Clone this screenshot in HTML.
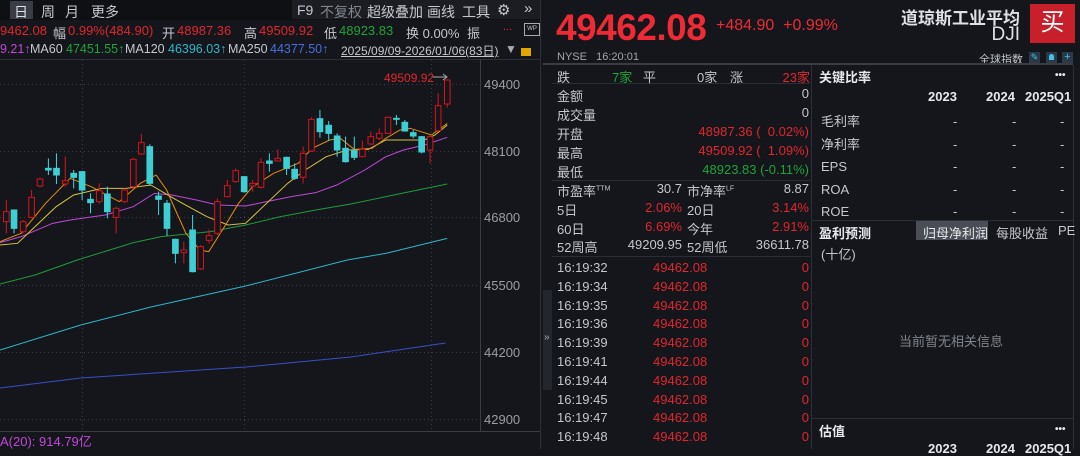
<!DOCTYPE html>
<html><head><meta charset="utf-8"><style>
*{margin:0;padding:0;box-sizing:border-box}
body{width:1080px;height:449px;background:#14161b;overflow:hidden;position:relative;font-family:"Liberation Sans","Noto Sans CJK SC",sans-serif;font-size:13px;color:#c4c7ce}
.a{position:absolute;white-space:nowrap}
.r{color:#e0262f}.g{color:#1fa33a}.w{color:#c8cbd2}
.hd{font-weight:bold;color:#e6e8ec}
.h{position:absolute;white-space:nowrap;font-size:13px;top:23px}
.m{position:absolute;white-space:nowrap;font-size:12.5px;top:42px}
.t{position:absolute;white-space:nowrap;font-size:14px;top:2px}
</style></head><body>
<!-- left header -->
<div class="a" style="left:0;top:0;width:541px;height:20px;background:#0f1014"></div>
<div class="a" style="left:10px;top:1px;width:23px;height:18px;background:#3a3d45"></div>
<div class="t" style="left:14px;color:#dfe1e6">日</div>
<div class="t" style="left:41px">周</div>
<div class="t" style="left:65px">月</div>
<div class="t" style="left:91px">更多</div>
<div class="a" style="left:292px;top:0;width:249px;height:19px;background:#1b1d22"></div>
<div class="t" style="left:297px">F9</div>
<div class="t" style="left:320px;color:#80848c">不复权</div>
<div class="t" style="left:367px">超级叠加</div>
<div class="t" style="left:427px">画线</div>
<div class="t" style="left:462px">工具</div>
<div class="t" style="left:497px;top:1px;font-size:15px">⚙</div>
<div class="t" style="left:524px;top:0;font-size:15px">»</div>
<div class="h r" style="left:0">9462.08</div>
<div class="h" style="left:53px">幅</div><div class="h r" style="left:68px">0.99%(484.90)</div>
<div class="h" style="left:162px">开</div><div class="h r" style="left:177px">48987.36</div>
<div class="h" style="left:244px">高</div><div class="h r" style="left:259px">49509.92</div>
<div class="h" style="left:324px">低</div><div class="h g" style="left:339px">48923.83</div>
<div class="h" style="left:406px">换 0.00%</div>
<div class="h" style="left:467px">振</div>
<div class="h r" style="left:503px;top:21px;font-size:11px">...</div>
<div class="a" style="left:524px;top:23px;width:16px;height:13px;border:1px solid #aaa;font-size:6px;text-align:center;line-height:11px">WP</div>
<div class="m" style="left:0;color:#c048d8">9.21↑</div>
<div class="m" style="left:30px">MA60</div><div class="m g" style="left:66px">47451.55↑</div>
<div class="m" style="left:125px">MA120</div><div class="m" style="left:168px;color:#2fb6c8">46396.03↑</div>
<div class="m" style="left:228px">MA250</div><div class="m" style="left:270px;color:#4a6ee0">44377.50↑</div>
<div class="m" style="left:341px;text-decoration:underline;font-size:12px">2025/09/09-2026/01/06(83日)</div>
<div class="m" style="left:505px;color:#aaa;font-size:12px">▼</div>
<div class="a" style="left:521px;top:48px;width:10px;height:8px;background:#e0a800"></div>
<div class="a" style="left:0;top:59px;width:541px;height:1px;background:#2c2f36"></div>
<!-- chart -->
<svg class="a" style="left:0;top:0" width="541" height="449">
<g stroke="#3a3d44" stroke-dasharray="1,3" stroke-width="1">
<line x1="0" y1="84.5" x2="480" y2="84.5"/><line x1="0" y1="151.5" x2="480" y2="151.5"/><line x1="0" y1="217.5" x2="480" y2="217.5"/><line x1="0" y1="285.5" x2="480" y2="285.5"/><line x1="0" y1="352.5" x2="480" y2="352.5"/><line x1="0" y1="419.5" x2="480" y2="419.5"/>
<line x1="82.5" y1="60" x2="82.5" y2="430"/><line x1="244.5" y1="60" x2="244.5" y2="430"/><line x1="431.5" y1="60" x2="431.5" y2="430"/>
</g>
<line x1="480.5" y1="60" x2="480.5" y2="431" stroke="#3a3d44"/>
<line x1="0" y1="431.5" x2="540" y2="431.5" stroke="#3a3d44"/>
<line x1="540.5" y1="0" x2="540.5" y2="449" stroke="#2c2f36"/>
<g fill="#9a9da4" font-size="13" font-family="Liberation Sans">
<text x="484" y="89">49400</text><text x="484" y="156">48100</text><text x="484" y="222">46800</text><text x="484" y="290">45500</text><text x="484" y="357">44200</text><text x="484" y="424">42900</text>
</g>
<text x="384" y="82" fill="#e0262f" font-size="12" font-family="Liberation Sans">49509.92</text>
<line x1="433" y1="77" x2="447" y2="77" stroke="#aaa"/><path d="M443 74 L447 77 L443 80" stroke="#aaa" fill="none"/>
<g transform="translate(0,60) scale(0.3508,0.33333)" fill="none" stroke-width="3">
<polyline stroke="#3a4fc8" points="0,984 230,954 700,921 1000,891 1270,849"/>
<polyline stroke="#2fb6c8" points="0,870 230,795 430,741 700,678 990,600 1100,580 1275,535"/>
<polyline stroke="#1f9a3c" points="0,672 100,645 220,600 380,548 460,530 600,515 700,495 800,470 900,450 1000,432 1100,410 1200,388 1275,372"/>
<polyline stroke="#c048d8" points="0,548 60,530 150,490 200,480 300,465 380,440 440,400 490,405 560,420 620,435 700,438 760,425 830,410 900,398 960,375 1040,330 1100,290 1150,270 1210,255 1275,232"/>
<polyline stroke="#d8c040" points="0,555 50,550 100,500 160,440 210,405 290,385 360,385 430,375 470,400 520,430 590,470 650,495 700,490 760,430 820,370 870,330 930,290 990,270 1050,268 1100,240 1160,240 1210,240 1240,225 1275,195"/>
<polyline stroke="#e08a10" points="0,545 60,520 130,430 200,355 260,380 340,425 400,370 445,345 475,390 500,450 530,520 570,570 595,575 640,500 680,430 720,380 780,340 850,310 890,265 940,240 970,235 1010,268 1060,265 1100,235 1140,210 1170,205 1200,215 1230,225 1275,190"/>
<g stroke="#d0141c" fill="#14161b">
<path d="M18 420V520M66 480V520M90 390V475M114 352V382M186 290V380M283 370V430M331 440V520M355 385V430M380 293V385M403 222V285M524 545V610M572 555V630M596 508V550M620 415V525M648 360V412M672 325V368M720 360V395M744 295V385M792 268V305M864 260V370M888 172V276M1033 242V292M1057 215V255M1081 205V240M1106 170V222M1226 225V310M1249 100V215M1275 58V143"/>
<rect x="10" y="455" width="16" height="30"/><rect x="58" y="485" width="16" height="30"/><rect x="82" y="412" width="16" height="60"/><rect x="106" y="357" width="16" height="21"/><rect x="178" y="362" width="16" height="10"/><rect x="275" y="392" width="16" height="33"/><rect x="323" y="445" width="16" height="27"/><rect x="347" y="390" width="16" height="35"/><rect x="372" y="298" width="16" height="82"/><rect x="395" y="248" width="16" height="34"/><rect x="516" y="570" width="16" height="8"/><rect x="564" y="560" width="16" height="67"/><rect x="588" y="527" width="16" height="14"/><rect x="612" y="425" width="16" height="95"/><rect x="640" y="377" width="16" height="33"/><rect x="664" y="332" width="16" height="33"/><rect x="712" y="370" width="16" height="8"/><rect x="736" y="307" width="16" height="75"/><rect x="784" y="295" width="16" height="8"/><rect x="856" y="280" width="16" height="72"/><rect x="880" y="178" width="16" height="95"/><rect x="1025" y="268" width="16" height="22"/><rect x="1049" y="230" width="16" height="22"/><rect x="1073" y="220" width="16" height="15"/><rect x="1098" y="172" width="16" height="48"/><rect x="1218" y="230" width="16" height="40"/><rect x="1241" y="137" width="16" height="75"/><rect x="1267" y="60" width="16" height="72"/>
</g>
<g stroke="#3dcfd4" fill="#3dcfd4">
<path d="M40 448V520M138 295V345M161 280V372M210 330V385M234 333V420M258 400V460M306 380V475M427 253V378M452 395V465M476 420V528M500 536V610M549 465V637M696 348V398M768 280V335M817 290V345M840 310V360M912 150V233M937 183V242M961 220V290M985 230V308M1010 230V300M1130 165V195M1154 180V215M1178 210V235M1202 228V280"/>
<rect x="32" y="450" width="16" height="55"/><rect x="130" y="325" width="16" height="5"/><rect x="153" y="325" width="16" height="20"/><rect x="202" y="340" width="16" height="12"/><rect x="226" y="335" width="16" height="55"/><rect x="250" y="418" width="16" height="10"/><rect x="298" y="402" width="16" height="53"/><rect x="419" y="260" width="16" height="110"/><rect x="444" y="408" width="16" height="10"/><rect x="468" y="430" width="16" height="75"/><rect x="492" y="538" width="16" height="42"/><rect x="541" y="510" width="16" height="125"/><rect x="688" y="350" width="16" height="45"/><rect x="760" y="303" width="16" height="7"/><rect x="809" y="292" width="16" height="33"/><rect x="832" y="328" width="16" height="27"/><rect x="904" y="176" width="16" height="39"/><rect x="929" y="196" width="16" height="24"/><rect x="953" y="228" width="16" height="42"/><rect x="977" y="265" width="16" height="40"/><rect x="1002" y="272" width="16" height="20"/><rect x="1122" y="175" width="16" height="3"/><rect x="1146" y="187" width="16" height="26"/><rect x="1170" y="218" width="16" height="10"/><rect x="1194" y="230" width="16" height="46"/>
</g>
</g>
<text x="0" y="446" fill="#c048d8" font-size="13" font-family="Liberation Sans,Noto Sans CJK SC">A(20): 914.79亿</text>
</svg>
<div class="a" style="left:543px;top:290px;width:9px;height:100px;background:#23262c"></div>
<div class="a" style="left:544px;top:332px;font-size:10px;color:#aaa">»</div>
<!-- right quote -->
<div class="a" style="left:556px;top:7px;font-size:37px;font-weight:bold;color:#ee2b35;letter-spacing:-0.5px">49462.08</div>
<div class="a" style="left:716px;top:17px;font-size:16px;color:#ee2b35">+484.90&nbsp;&nbsp;+0.99%</div>
<div class="a" style="right:60px;top:4px;font-size:17px;color:#dfe1e6;font-weight:bold">道琼斯工业平均</div>
<div class="a" style="right:60px;top:24px;font-size:19px;color:#dfe1e6">DJI</div>
<div class="a" style="left:1030px;top:4px;width:45px;height:39px;background:#c8202a;color:#fff;font-size:24px;text-align:center;line-height:38px">买</div>
<div class="a" style="left:557px;top:51px;font-size:11px;color:#a0a4ac">NYSE&nbsp;&nbsp;&nbsp;16:20:01</div>
<div class="a" style="left:979px;top:51px;font-size:11px;color:#c4c7ce">全球指数</div>
<div class="a" style="left:1029px;top:52px;width:11px;height:11px;background:#2a3a4a;color:#4ac0e0;font-size:9px;text-align:center;line-height:11px">✎</div>
<div class="a" style="left:1046px;top:52px;width:11px;height:11px;background:#2a3a4a"></div><div class="a" style="left:1049px;top:54px;width:5px;height:6px;background:#4ac0e0;border-radius:3px 3px 0 0"></div>
<div class="a" style="left:1062px;top:52px;width:11px;height:11px;background:#2a3a4a;color:#4ac0e0;font-size:11px;text-align:center;line-height:11px">+</div>
<div class="a" style="left:543px;top:63px;width:530px;height:2px;background:#3a3d44"></div>
<div class="a" style="left:811px;top:65px;width:1px;height:384px;background:#2c2f36"></div>
<div class="a" style="left:1073px;top:65px;width:1px;height:384px;background:#2c2f36"></div>
<div class="a" style="left:552px;top:83px;width:258px;height:1px;background:#2a2d33"></div>
<div class="a" style="left:552px;top:180px;width:258px;height:1px;background:#2a2d33"></div>
<div class="a" style="left:552px;top:256px;width:258px;height:1px;background:#2a2d33"></div>
<div class="a" style="left:557px;top:67px">跌</div><div class="a g" style="left:612px;top:67px">7家</div><div class="a" style="left:643px;top:67px">平</div><div class="a" style="left:697px;top:67px">0家</div><div class="a" style="left:730px;top:67px">涨</div><div class="a r" style="right:270px;top:67px">23家</div>
<div class="a" style="left:557px;top:86px">金额</div><div class="a" style="right:271px;top:86px">0</div>
<div class="a" style="left:557px;top:105px">成交量</div><div class="a" style="right:271px;top:105px">0</div>
<div class="a" style="left:557px;top:124px">开盘</div><div class="a r" style="right:271px;top:124px">48987.36 (&nbsp;&nbsp;0.02%)</div>
<div class="a" style="left:557px;top:143px">最高</div><div class="a r" style="right:271px;top:143px">49509.92 (&nbsp;&nbsp;1.09%)</div>
<div class="a" style="left:557px;top:162px">最低</div><div class="a g" style="right:271px;top:162px">48923.83 (-0.11%)</div>
<div class="a" style="left:557px;top:181px">市盈率<sup style="font-size:7px">TTM</sup></div><div class="a" style="right:398px;top:181px">30.7</div><div class="a" style="left:687px;top:181px">市净率<sup style="font-size:7px">LF</sup></div><div class="a" style="right:271px;top:181px">8.87</div>
<div class="a" style="left:557px;top:200px">5日</div><div class="a r" style="right:398px;top:200px">2.06%</div><div class="a" style="left:687px;top:200px">20日</div><div class="a r" style="right:271px;top:200px">3.14%</div>
<div class="a" style="left:557px;top:219px">60日</div><div class="a r" style="right:398px;top:219px">6.69%</div><div class="a" style="left:687px;top:219px">今年</div><div class="a r" style="right:271px;top:219px">2.91%</div>
<div class="a" style="left:557px;top:237px">52周高</div><div class="a" style="right:398px;top:237px">49209.95</div><div class="a" style="left:687px;top:237px">52周低</div><div class="a" style="right:271px;top:237px">36611.78</div>
<div class="a" style="left:557px;top:259px;line-height:18.8px">16:19:32<br>16:19:34<br>16:19:35<br>16:19:36<br>16:19:39<br>16:19:41<br>16:19:44<br>16:19:45<br>16:19:47<br>16:19:48</div>
<div class="a r" style="left:653px;top:259px;line-height:18.8px">49462.08<br>49462.08<br>49462.08<br>49462.08<br>49462.08<br>49462.08<br>49462.08<br>49462.08<br>49462.08<br>49462.08</div>
<div class="a r" style="right:271px;top:259px;line-height:18.8px;text-align:right">0<br>0<br>0<br>0<br>0<br>0<br>0<br>0<br>0<br>0</div>
<!-- ratios -->
<div class="a hd" style="left:819px;top:67px">关键比率</div><div class="a hd" style="left:1055px;top:70px;font-size:10px">•••</div>
<div class="a hd" style="left:928px;top:89px">2023</div><div class="a hd" style="left:986px;top:89px">2024</div><div class="a hd" style="left:1025px;top:89px">2025Q1</div>
<div class="a" style="left:821px;top:111px;line-height:22.5px">毛利率<br>净利率<br>EPS<br>ROA<br>ROE</div>
<div class="a" style="left:953px;top:111px;line-height:22.5px">-<br>-<br>-<br>-<br>-</div>
<div class="a" style="left:1012px;top:111px;line-height:22.5px">-<br>-<br>-<br>-<br>-</div>
<div class="a" style="left:1060px;top:111px;line-height:22.5px">-<br>-<br>-<br>-<br>-</div>
<div class="a" style="left:812px;top:220px;width:261px;height:1px;background:#2c2f36"></div>
<div class="a hd" style="left:819px;top:223px">盈利预测</div>
<div class="a" style="left:916px;top:221px;width:72px;height:19px;background:#4a4d55"></div>
<div class="a" style="left:923px;top:223px;color:#e6e8ec">归母净利润</div>
<div class="a" style="left:996px;top:223px">每股收益</div>
<div class="a" style="left:1058px;top:223px">PE</div>
<div class="a" style="left:821px;top:244px">(十亿)</div>
<div class="a" style="left:899px;top:331px;color:#80848c">当前暂无相关信息</div>
<div class="a" style="left:812px;top:418px;width:261px;height:1px;background:#2c2f36"></div>
<div class="a hd" style="left:819px;top:421px">估值</div><div class="a hd" style="left:1055px;top:424px;font-size:10px">•••</div>
<div class="a hd" style="left:928px;top:441px">2023</div><div class="a hd" style="left:986px;top:441px">2024</div><div class="a hd" style="left:1025px;top:441px">2025Q1</div>
</body></html>
